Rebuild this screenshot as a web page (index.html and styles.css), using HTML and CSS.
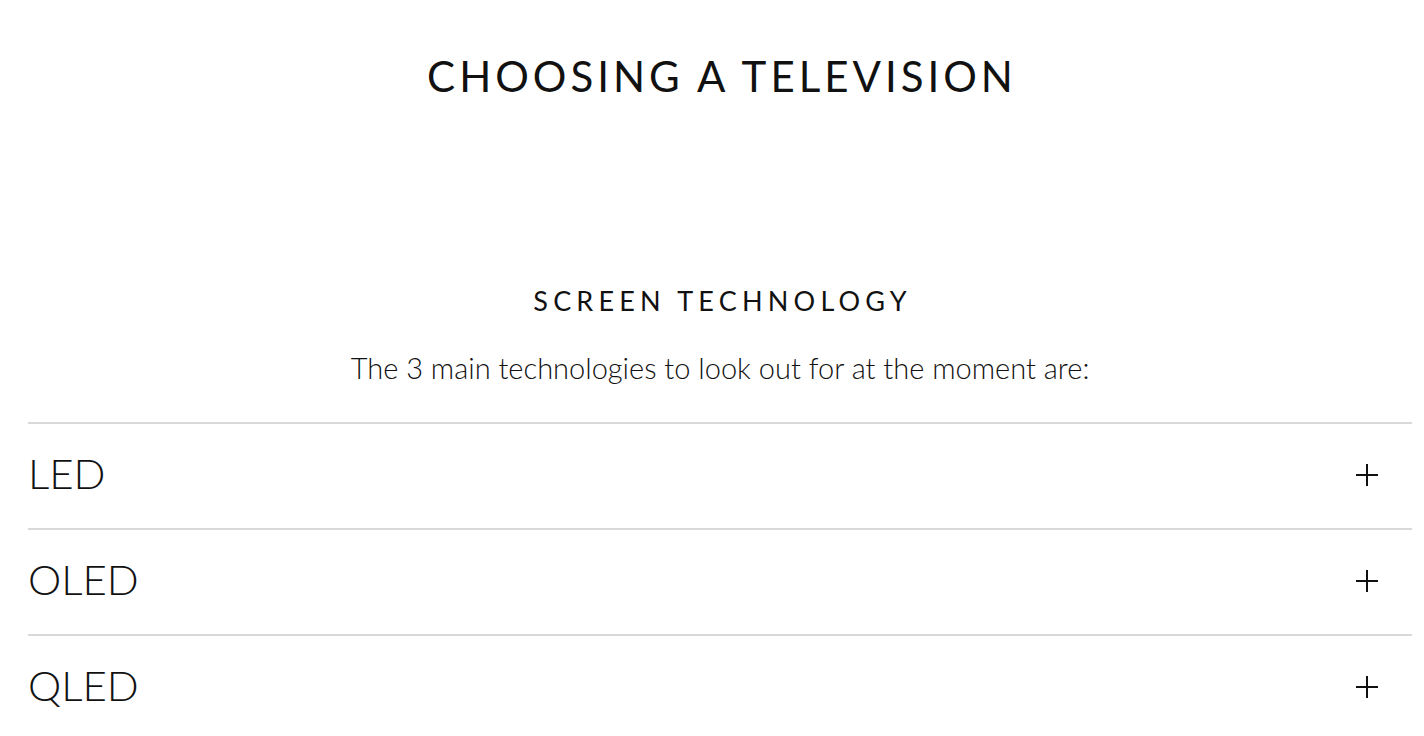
FILE: index.html
```html
<!DOCTYPE html>
<html lang="en">
<head>
<meta charset="utf-8">
<title>Choosing a television</title>
<link rel="stylesheet" href="styles.css">
</head>
<body>
<main class="page">
  <h1 class="page-title">CHOOSING A TELEVISION</h1>
  <section class="section">
    <h2 class="section-title">SCREEN TECHNOLOGY</h2>
    <p class="section-intro">The 3 main technologies to look out for at the moment are:</p>
    <div class="accordion">
      <div class="acc-item">
        <span class="acc-label">LED</span>
        <svg class="acc-icon" width="22" height="22" viewBox="0 0 22 22" aria-hidden="true"><path d="M11 0V22M0 11H22" stroke="#111" stroke-width="2" fill="none"/></svg>
      </div>
      <div class="acc-item">
        <span class="acc-label">OLED</span>
        <svg class="acc-icon" width="22" height="22" viewBox="0 0 22 22" aria-hidden="true"><path d="M11 0V22M0 11H22" stroke="#111" stroke-width="2" fill="none"/></svg>
      </div>
      <div class="acc-item">
        <span class="acc-label">QLED</span>
        <svg class="acc-icon" width="22" height="22" viewBox="0 0 22 22" aria-hidden="true"><path d="M11 0V22M0 11H22" stroke="#111" stroke-width="2" fill="none"/></svg>
      </div>
    </div>
  </section>
</main>
</body>
</html>
```

FILE: styles.css
```css
html, body {
  margin: 0;
  padding: 0;
  background: #fff;
}
body {
  font-family: "Lato", "Open Sans", sans-serif;
  color: #111;
}
.page {
  margin: 0 12px 0 28px;
  display: flex;
  flex-direction: column;
}
.page-title {
  margin: 50px 0 0;
  font-size: 42px;
  line-height: 52px;
  font-weight: 400;
  letter-spacing: 4px;
  text-indent: 4px;
  text-align: center;
}
.section {
  margin-top: 183px;
  display: flex;
  flex-direction: column;
}
.section-title {
  margin: 0;
  font-size: 27px;
  line-height: 32px;
  font-weight: 400;
  letter-spacing: 5.2px;
  text-indent: 5.2px;
  text-align: center;
}
.section-intro {
  margin: 33px 0 0;
  font-size: 29px;
  line-height: 36px;
  font-weight: 300;
  text-align: center;
}
.accordion {
  margin-top: 36px;
  display: flex;
  flex-direction: column;
}
.acc-item {
  border-top: 2px solid #d9d9d9;
  height: 104px;
  display: flex;
  align-items: center;
  justify-content: space-between;
  padding: 0 34px 0 0;
}
.acc-label {
  font-size: 42px;
  font-weight: 300;
  line-height: 52px;
  padding-bottom: 6px;
}
.acc-icon {
  display: block;
  margin-bottom: 2px;
}
```
